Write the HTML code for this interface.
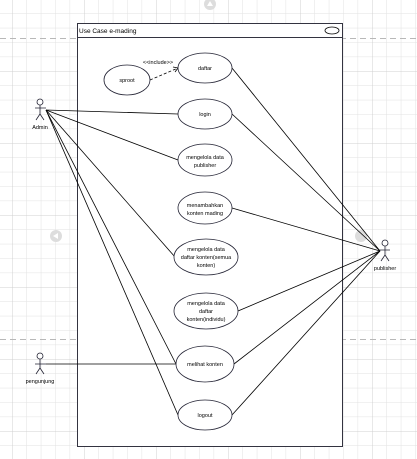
<!DOCTYPE html>
<html><head><style>
html,body{margin:0;padding:0;background:#fff;}
svg{display:block;font-family:"Liberation Sans",sans-serif;}
</style></head><body>
<svg width="417" height="459" viewBox="0 0 417 459" xmlns="http://www.w3.org/2000/svg">
<defs>
<pattern id="g" x="12" y="-1" width="14.4" height="14.4" patternUnits="userSpaceOnUse">
<path d="M0 0V14.4M0 0H14.4" stroke="#e2e2e2" stroke-width="1" fill="none"/>
</pattern>
<pattern id="G" x="12" y="-1" width="72" height="72" patternUnits="userSpaceOnUse">
<path d="M0 0V72M0 0H72" stroke="#d0d0d0" stroke-width="1" fill="none"/>
</pattern>
</defs>
<rect width="417" height="459" fill="#fff"/>
<rect width="417" height="459" fill="url(#g)"/>
<rect width="417" height="459" fill="url(#G)"/>
<path d="M0 38.5H417M0 339.5H417" stroke="#b8b8b8" stroke-dasharray="6,4"/>
<circle cx="210" cy="4" r="6" fill="#ddd"/><path d="M207 6L210 1L213 6Z" fill="#fff"/>
<circle cx="56" cy="236" r="6" fill="#ddd"/><path d="M58 233L53 236L58 239Z" fill="#fff"/>
<circle cx="361" cy="236" r="6" fill="#ddd"/>
<rect x="77.5" y="23.5" width="265" height="423" fill="#fff" stroke="#333340"/>
<line x1="77" y1="37.5" x2="342" y2="37.5" stroke="#333340"/>
<text x="79" y="33" font-size="6.5" fill="#000">Use Case e-mading</text>
<ellipse cx="332" cy="30.5" rx="7" ry="3.5" fill="none" stroke="#000" stroke-width="0.8"/>
<g stroke="#000" stroke-width="0.8" fill="none">
<line x1="46" y1="110" x2="178" y2="114"/>
<line x1="46" y1="110" x2="178" y2="160"/>
<line x1="46" y1="110" x2="175" y2="257"/>
<line x1="46" y1="110" x2="176" y2="364"/>
<line x1="46" y1="110" x2="178" y2="415"/>
<line x1="232" y1="68" x2="380" y2="251"/>
<line x1="232" y1="114" x2="380" y2="251"/>
<line x1="232" y1="208" x2="380" y2="251"/>
<line x1="238" y1="311" x2="380" y2="251"/>
<line x1="234" y1="364" x2="380" y2="251"/>
<line x1="232" y1="415" x2="380" y2="251"/>
<line x1="46" y1="364" x2="176" y2="364"/>
<path d="M150 80L178 68" stroke-dasharray="3,2"/>
<path d="M173 67L178 68L175 72"/>
</g>
<g stroke="#223" stroke-width="0.8" fill="#fff">
<ellipse cx="127" cy="80" rx="23" ry="15"/>
<ellipse cx="205" cy="68" rx="27" ry="15"/>
<ellipse cx="205" cy="114" rx="27" ry="15"/>
<ellipse cx="205" cy="160" rx="27" ry="16"/>
<ellipse cx="205" cy="208" rx="27" ry="16"/>
<ellipse cx="206" cy="257" rx="32" ry="18"/>
<ellipse cx="206" cy="311" rx="32" ry="18"/>
<ellipse cx="205" cy="364" rx="29" ry="18"/>
<ellipse cx="205" cy="415" rx="27" ry="15"/>
</g>
<g font-size="5.5" text-anchor="middle" fill="#000">
<text x="127" y="82">sproot</text>
<text x="158" y="64">&lt;&lt;include&gt;&gt;</text>
<text x="205" y="70">daftar</text>
<text x="205" y="116">login</text>
<text x="205" y="159">mengelola data</text><text x="205" y="167">publisher</text>
<text x="205" y="207">menambahkan</text><text x="205" y="215">konten mading</text>
<text x="206" y="251">mengelola data</text><text x="206" y="259">daftar konten(semua</text><text x="206" y="267">konten)</text>
<text x="206" y="305">mengelola data</text><text x="206" y="313">daftar</text><text x="206" y="321">konten(individu)</text>
<text x="205" y="366">melihat konten</text>
<text x="205" y="417">logout</text>
<text x="40" y="129">Admin</text>
<text x="385" y="270">publisher</text>
<text x="40" y="383">pengunjung</text>
</g>
<g stroke="#223" stroke-width="0.8" fill="#fff">
<circle cx="40" cy="102" r="3"/><path d="M40 105V114M35 108H46M40 114L36 120M40 114L44 120"/>
<circle cx="385" cy="243" r="3"/><path d="M385 246V255M379 250H390M385 255L381 261M385 255L389 261"/>
<circle cx="40" cy="356" r="3"/><path d="M40 359V368M35 364H46M40 368L36 374M40 368L44 374"/>
</g>
</svg>
</body></html>
